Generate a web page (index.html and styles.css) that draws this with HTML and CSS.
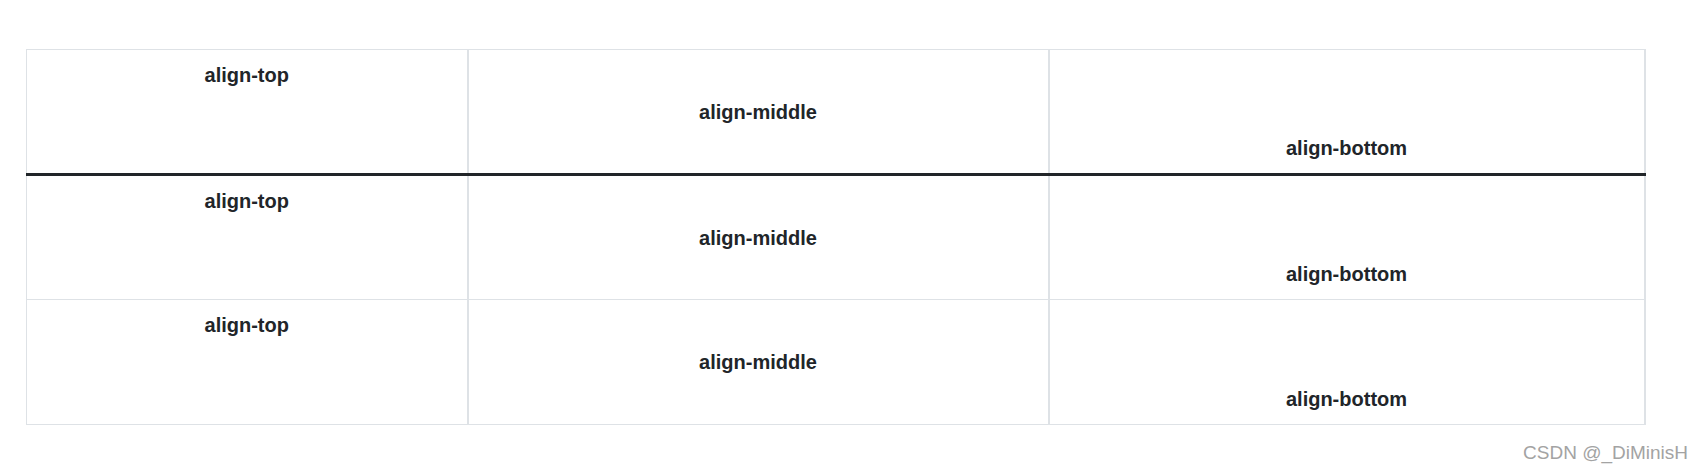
FILE: index.html
```html
<!DOCTYPE html>
<html lang="en">
<head>
<meta charset="utf-8">
<title>Vertical alignment table</title>
<link rel="stylesheet" href="styles.css">
</head>
<body>
<div class="page">
  <table class="align-table">
    <colgroup>
      <col class="col-a">
      <col class="col-b">
      <col class="col-c">
    </colgroup>
    <thead>
      <tr>
        <th class="v-top">align-top</th>
        <th class="v-middle">align-middle</th>
        <th class="v-bottom">align-bottom</th>
      </tr>
    </thead>
    <tbody class="group-divider">
      <tr>
        <td class="v-top">align-top</td>
        <td class="v-middle">align-middle</td>
        <td class="v-bottom">align-bottom</td>
      </tr>
      <tr class="last-row">
        <td class="v-top">align-top</td>
        <td class="v-middle">align-middle</td>
        <td class="v-bottom">align-bottom</td>
      </tr>
    </tbody>
  </table>
  <div class="watermark">CSDN @_DiMinisH</div>
</div>
</body>
</html>
```

FILE: styles.css
```css
html, body {
  margin: 0;
  padding: 0;
  background: #ffffff;
}

.page {
  padding: 49px 0 0 26px;
  font-family: "Liberation Sans", Arial, sans-serif;
  color: #212529;
}

.align-table {
  border-collapse: collapse;
  table-layout: fixed;
  width: 1618px;
  font-size: 20px;
  line-height: 30px;
  font-weight: 700;
}

.col-a { width: 441px; }
.col-b { width: 581px; }
.col-c { width: 596px; }

.align-table th,
.align-table td {
  height: 103px;
  padding: 10px;
  text-align: center;
  border-top: 1px solid #dee2e6;
  border-bottom: 1px solid #dee2e6;
  border-left: 2px solid #dee2e6;
  border-right: 2px solid #dee2e6;
  font-weight: 700;
}

.align-table .last-row td {
  height: 104px;
}

.align-table tr > :first-child {
  border-left-width: 1px;
}

.group-divider tr:first-child td {
  border-top: 3px solid #212529;
}

.v-top { vertical-align: top; }
.v-middle { vertical-align: middle; }
.v-bottom { vertical-align: bottom; }

.watermark {
  margin-top: 17px;
  padding-right: 5px;
  text-align: right;
  font-family: "Liberation Sans", Arial, sans-serif;
  font-size: 19px;
  line-height: 22px;
  color: #a3a3a3;
}
```
